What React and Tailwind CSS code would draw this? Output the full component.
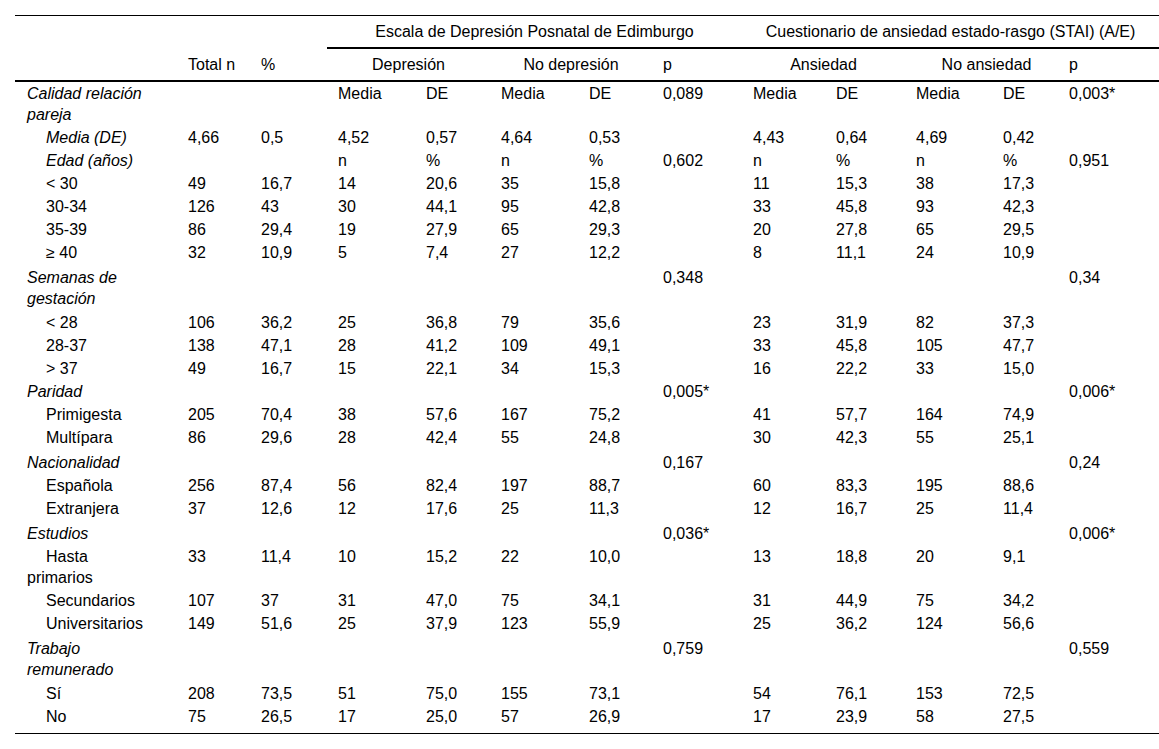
import React from "react";

const widths = [162, 73, 77, 88, 75, 88, 74, 90, 83, 80, 87, 66, 101];

const rows = [
  { label: "Calidad relación pareja", type: "group", cells: ["", "", "Media", "DE", "Media", "DE", "0,089", "Media", "DE", "Media", "DE", "0,003*"] },
  { label: "Media (DE)", type: "subi", cells: ["4,66", "0,5", "4,52", "0,57", "4,64", "0,53", "", "4,43", "0,64", "4,69", "0,42", ""] },
  { label: "Edad (años)", type: "subi", cells: ["", "", "n", "%", "n", "%", "0,602", "n", "%", "n", "%", "0,951"] },
  { label: "< 30", type: "sub", cells: ["49", "16,7", "14", "20,6", "35", "15,8", "", "11", "15,3", "38", "17,3", ""] },
  { label: "30-34", type: "sub", cells: ["126", "43", "30", "44,1", "95", "42,8", "", "33", "45,8", "93", "42,3", ""] },
  { label: "35-39", type: "sub", cells: ["86", "29,4", "19", "27,9", "65", "29,3", "", "20", "27,8", "65", "29,5", ""] },
  { label: "≥ 40", type: "sub", cells: ["32", "10,9", "5", "7,4", "27", "12,2", "", "8", "11,1", "24", "10,9", ""] },
  { label: "Semanas de gestación", type: "group", pad: "pt-[3px] pb-[2px]", cells: ["", "", "", "", "", "", "0,348", "", "", "", "", "0,34"] },
  { label: "< 28", type: "sub", cells: ["106", "36,2", "25", "36,8", "79", "35,6", "", "23", "31,9", "82", "37,3", ""] },
  { label: "28-37", type: "sub", cells: ["138", "47,1", "28", "41,2", "109", "49,1", "", "33", "45,8", "105", "47,7", ""] },
  { label: "> 37", type: "sub", cells: ["49", "16,7", "15", "22,1", "34", "15,3", "", "16", "22,2", "33", "15,0", ""] },
  { label: "Paridad", type: "group", cells: ["", "", "", "", "", "", "0,005*", "", "", "", "", "0,006*"] },
  { label: "Primigesta", type: "sub", cells: ["205", "70,4", "38", "57,6", "167", "75,2", "", "41", "57,7", "164", "74,9", ""] },
  { label: "Multípara", type: "sub", cells: ["86", "29,6", "28", "42,4", "55", "24,8", "", "30", "42,3", "55", "25,1", ""] },
  { label: "Nacionalidad", type: "group", pad: "pt-[3px] pb-[1px]", cells: ["", "", "", "", "", "", "0,167", "", "", "", "", "0,24"] },
  { label: "Española", type: "sub", cells: ["256", "87,4", "56", "82,4", "197", "88,7", "", "60", "83,3", "195", "88,6", ""] },
  { label: "Extranjera", type: "sub", cells: ["37", "12,6", "12", "17,6", "25", "11,3", "", "12", "16,7", "25", "11,4", ""] },
  { label: "Estudios", type: "group", pad: "pt-[3px] pb-[1px]", cells: ["", "", "", "", "", "", "0,036*", "", "", "", "", "0,006*"] },
  { label: "Hasta primarios", type: "sub", cells: ["33", "11,4", "10", "15,2", "22", "10,0", "", "13", "18,8", "20", "9,1", ""] },
  { label: "Secundarios", type: "sub", cells: ["107", "37", "31", "47,0", "75", "34,1", "", "31", "44,9", "75", "34,2", ""] },
  { label: "Universitarios", type: "sub", cells: ["149", "51,6", "25", "37,9", "123", "55,9", "", "25", "36,2", "124", "56,6", ""] },
  { label: "Trabajo remunerado", type: "group", pad: "pt-[3px] pb-[2px]", cells: ["", "", "", "", "", "", "0,759", "", "", "", "", "0,559"] },
  { label: "Sí", type: "sub", cells: ["208", "73,5", "51", "75,0", "155", "73,1", "", "54", "76,1", "153", "72,5", ""] },
  { label: "No", type: "sub", pad: "pt-[1px] pb-[6px]", cells: ["75", "26,5", "17", "25,0", "57", "26,9", "", "17", "23,9", "58", "27,5", ""] },
];

export default function App() {
  return (
    <div
      className="w-[1159px] h-[749px] bg-white text-black overflow-hidden"
      style={{ fontFamily: '"Liberation Sans", Arial, sans-serif' }}
    >
      <table className="mt-[15px] ml-[15px] w-[1144px] table-fixed border-separate border-spacing-0 border-t border-b border-black text-[16px] leading-[21px]">
        <colgroup>
          {widths.map((w, i) => (
            <col key={i} style={{ width: w + "px" }} />
          ))}
        </colgroup>
        <thead>
          <tr>
            <th className="p-0"></th>
            <th className="p-0"></th>
            <th className="p-0"></th>
            <th colSpan={5} className="px-[11px] pt-[5px] pb-[5px] border-b-2 border-black font-normal text-center whitespace-nowrap">
              Escala de Depresión Posnatal de Edimburgo
            </th>
            <th colSpan={5} className="px-[11px] pt-[5px] pb-[5px] border-b-2 border-black font-normal text-center whitespace-nowrap">
              Cuestionario de ansiedad estado-rasgo (STAI) (A/E)
            </th>
          </tr>
          <tr>
            <th className="pl-[12px] pt-[5px] pb-[5px] border-b-2 border-black font-normal text-left"></th>
            <th className="px-[11px] pt-[5px] pb-[5px] border-b-2 border-black font-normal text-left whitespace-nowrap">Total n</th>
            <th className="px-[11px] pt-[5px] pb-[5px] border-b-2 border-black font-normal text-left">%</th>
            <th colSpan={2} className="px-[11px] pt-[5px] pb-[5px] border-b-2 border-black font-normal text-center">Depresión</th>
            <th colSpan={2} className="px-[11px] pt-[5px] pb-[5px] border-b-2 border-black font-normal text-center">No depresión</th>
            <th className="px-[11px] pt-[5px] pb-[5px] border-b-2 border-black font-normal text-left">p</th>
            <th colSpan={2} className="px-[11px] pt-[5px] pb-[5px] border-b-2 border-black font-normal text-center">Ansiedad</th>
            <th colSpan={2} className="pl-[21px] pr-[11px] pt-[5px] pb-[5px] border-b-2 border-black font-normal text-center">No ansiedad</th>
            <th className="px-[11px] pt-[5px] pb-[5px] border-b-2 border-black font-normal text-left">p</th>
          </tr>
        </thead>
        <tbody>
          {rows.map((r, ri) => {
            const pad = r.pad || "pt-[1px] pb-[1px]";
            const labelCls =
              r.type === "group"
                ? "italic"
                : r.type === "subi"
                ? "italic indent-[19px]"
                : "indent-[19px]";
            return (
              <tr key={ri}>
                <td className={`pl-[12px] pr-[28px] align-top text-left ${pad} ${labelCls}`}>{r.label}</td>
                {r.cells.map((c, ci) => (
                  <td key={ci} className={`px-[11px] align-top text-left whitespace-nowrap ${pad}`}>
                    {c}
                  </td>
                ))}
              </tr>
            );
          })}
        </tbody>
      </table>
    </div>
  );
}
